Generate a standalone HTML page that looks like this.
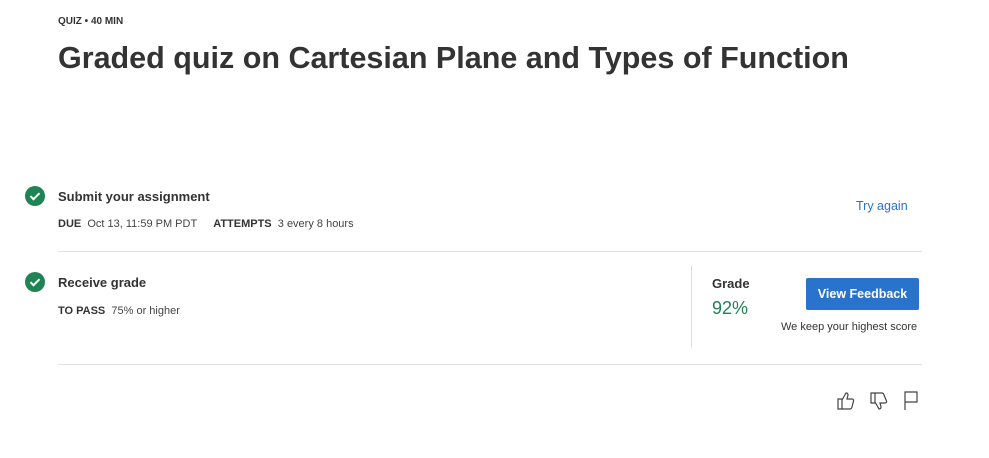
<!DOCTYPE html>
<html><head><style>
*{margin:0;padding:0;box-sizing:border-box}
body{width:989px;height:458px;background:#fff;font-family:"Liberation Sans",sans-serif;color:#1f1f1f;position:relative;overflow:hidden}
.a{position:absolute;white-space:nowrap}
.chk{position:absolute;width:20px;height:20px;border-radius:50%;background:#1f8354}
.chk svg{position:absolute;left:0;top:0}
.lbl{font-size:11px;font-weight:bold;color:#333}
.val{font-size:11px;color:#444}
</style></head><body>
<div class="a" style="left:58px;top:16px;font-size:10px;font-weight:bold;color:#333">QUIZ • 40 MIN</div>
<div class="a" style="left:58px;top:41px;font-size:30.5px;font-weight:bold;color:#333">Graded quiz on Cartesian Plane and Types of Function</div>

<div class="chk" style="left:25px;top:186px"><svg width="20" height="20"><path d="M5.5 10.2l3 3 6-6" stroke="#fff" stroke-width="2" fill="none"/></svg></div>
<div class="a" style="left:58px;top:189px;font-size:13px;font-weight:bold;color:#333">Submit your assignment</div>
<div class="a" style="left:58px;top:214px"><span class="lbl">DUE</span><span class="val">&nbsp;&nbsp;Oct 13, 11:59 PM PDT</span><span class="lbl" style="margin-left:16px">ATTEMPTS</span><span class="val">&nbsp;&nbsp;3 every 8 hours</span></div>
<div class="a" style="left:856px;top:199px;font-size:12.5px;color:#2a73cc">Try again</div>
<div class="a" style="left:58px;top:251px;width:864px;height:1px;background:#e0e0e0"></div>

<div class="chk" style="left:25px;top:272px"><svg width="20" height="20"><path d="M5.5 10.2l3 3 6-6" stroke="#fff" stroke-width="2" fill="none"/></svg></div>
<div class="a" style="left:58px;top:275px;font-size:13px;font-weight:bold;color:#333">Receive grade</div>
<div class="a" style="left:58px;top:301px"><span class="lbl">TO PASS</span><span class="val">&nbsp;&nbsp;75% or higher</span></div>
<div class="a" style="left:691px;top:266px;width:1px;height:82px;background:#ddd"></div>
<div class="a" style="left:712px;top:276px;font-size:13px;font-weight:bold;color:#333">Grade</div>
<div class="a" style="left:712px;top:298px;font-size:18px;color:#1f8354">92%</div>
<div class="a" style="left:806px;top:278px;width:113px;height:32px;background:#2a73cc;border-radius:2px;color:#fff;font-size:12.5px;font-weight:bold;text-align:center;line-height:32px">View Feedback</div>
<div class="a" style="left:781px;top:321px;font-size:11px;color:#333">We keep your highest score</div>
<div class="a" style="left:58px;top:364px;width:864px;height:1px;background:#e0e0e0"></div>

<svg class="a" style="left:836px;top:389px" width="20" height="22" viewBox="0 0 20 22" fill="none" stroke="#444" stroke-width="1.2">
<path d="M2 10h4v10H2zM6 11l4-7c1.5 0 2 1 2 2l-1 4h5c1 0 2 1 1.5 2l-1.5 6c-.3 1-1 2-2 2H6"/>
</svg>
<svg class="a" style="left:869px;top:391px" width="20" height="22" viewBox="0 0 20 22" fill="none" stroke="#444" stroke-width="1.2">
<path d="M2 2h4v10H2zM6 11l4 7c1.5 0 2-1 2-2l-1-4h5c1 0 2-1 1.5-2L15 4c-.3-1-1-2-2-2H6"/>
</svg>
<svg class="a" style="left:902px;top:389px" width="18" height="22" viewBox="0 0 18 22" fill="none" stroke="#444" stroke-width="1.2">
<path d="M3 21V3h12v10H3"/>
</svg>
</body></html>
